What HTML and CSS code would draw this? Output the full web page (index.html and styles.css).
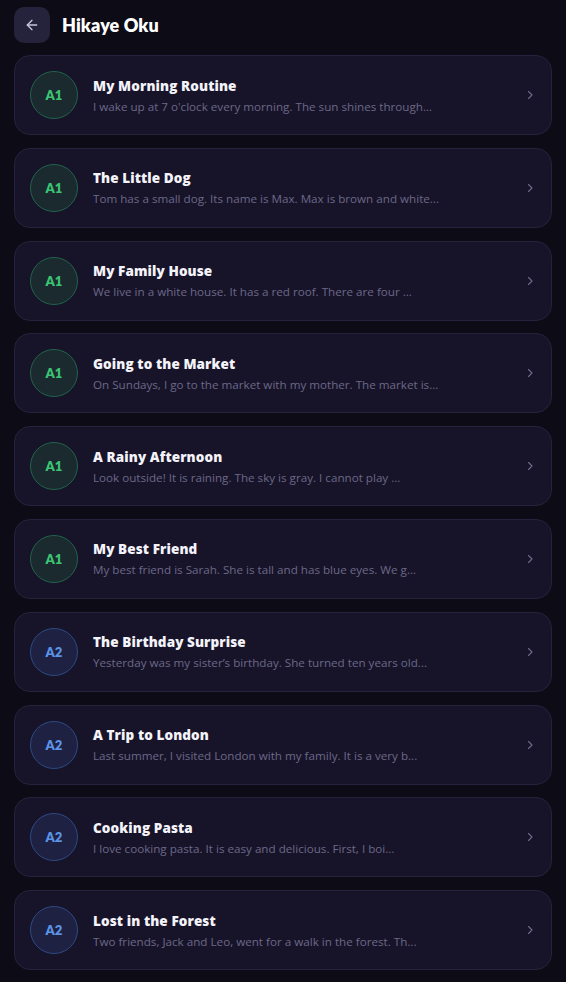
FILE: index.html
```html
<!DOCTYPE html>
<html lang="tr">
<head>
    <meta charset="UTF-8">
    <meta name="viewport" content="width=device-width, initial-scale=1.0">
    <title>Hikaye Oku</title>
    <link rel="stylesheet" href="styles.css">
</head>
<body>
    <header class="topbar">
        <button class="back-btn" type="button" aria-label="Geri">
            <svg width="16" height="16" viewBox="0 0 24 24" fill="none" stroke="currentColor" stroke-width="2" stroke-linecap="round" stroke-linejoin="round">
                <path d="M19 12H5"/>
                <path d="M12 19l-7-7 7-7"/>
            </svg>
        </button>
        <h1>Hikaye Oku</h1>
    </header>

    <div class="story-list" id="storyList"></div>

    <script>
        const stories = [
            { level: 'A1', title: 'My Morning Routine', text: 'I wake up at 7 o\'clock every morning. The sun shines through...' },
            { level: 'A1', title: 'The Little Dog', text: 'Tom has a small dog. Its name is Max. Max is brown and white...' },
            { level: 'A1', title: 'My Family House', text: 'We live in a white house. It has a red roof. There are four ...' },
            { level: 'A1', title: 'Going to the Market', text: 'On Sundays, I go to the market with my mother. The market is...' },
            { level: 'A1', title: 'A Rainy Afternoon', text: 'Look outside! It is raining. The sky is gray. I cannot play ...' },
            { level: 'A1', title: 'My Best Friend', text: 'My best friend is Sarah. She is tall and has blue eyes. We g...' },
            { level: 'A2', title: 'The Birthday Surprise', text: 'Yesterday was my sister\u2019s birthday. She turned ten years old...' },
            { level: 'A2', title: 'A Trip to London', text: 'Last summer, I visited London with my family. It is a very b...' },
            { level: 'A2', title: 'Cooking Pasta', text: 'I love cooking pasta. It is easy and delicious. First, I boi...' },
            { level: 'A2', title: 'Lost in the Forest', text: 'Two friends, Jack and Leo, went for a walk in the forest. Th...' }
        ];

        const list = document.getElementById('storyList');

        stories.forEach(story => {
            const card = document.createElement('a');
            card.href = '#';
            card.className = 'story-card';
            card.innerHTML = `
                <span class="level level-${story.level.toLowerCase()}">${story.level}</span>
                <div class="story-info">
                    <div class="story-title">${story.title}</div>
                    <div class="story-text">${story.text}</div>
                </div>
                <svg class="chevron" width="12" height="12" viewBox="0 0 24 24" fill="none" stroke="currentColor" stroke-width="2.2" stroke-linecap="round" stroke-linejoin="round">
                    <path d="M9 5l7 7-7 7"/>
                </svg>
            `;
            list.appendChild(card);
        });
    </script>
</body>
</html>
```

FILE: styles.css
```css
body {
    font-family: Lato, "Noto Sans", sans-serif;
    margin: 0;
    padding: 0 14px;
    background-color: #0c0b16;
    color: #ffffff;
}
.topbar {
    display: flex;
    align-items: center;
    gap: 12px;
    padding-top: 7px;
    height: 36px;
}
.back-btn {
    width: 36px;
    height: 36px;
    border: none;
    border-radius: 10px;
    background: #25233b;
    color: #c9c6dc;
    display: flex;
    align-items: center;
    justify-content: center;
    padding: 0;
}
.topbar h1 {
    margin: 0;
    font-size: 18px;
    font-weight: 800;
    letter-spacing: 0.1px;
}
.story-list {
    display: flex;
    flex-direction: column;
    gap: 12.8px;
    padding-top: 12px;
    padding-bottom: 12px;
}
.story-card {
    display: flex;
    align-items: center;
    height: 78px;
    padding: 0 15px 0 15px;
    background: #171429;
    border: 1px solid #26223d;
    border-radius: 16px;
    text-decoration: none;
    color: inherit;
}
.level {
    flex: none;
    width: 46px;
    height: 46px;
    border-radius: 50%;
    display: flex;
    align-items: center;
    justify-content: center;
    font-size: 13px;
    font-weight: 800;
}
.level-a1 {
    background: #1a2a2f;
    border: 1px solid #21634a;
    color: #3cc474;
}
.level-a2 {
    background: #1e2142;
    border: 1px solid #2d4a84;
    color: #5b93e6;
}
.story-info {
    flex: 1;
    margin-left: 15px;
    min-width: 0;
    font-family: "Open Sans", "Noto Sans", sans-serif;
}
.story-title {
    font-size: 13.5px;
    font-weight: 800;
    color: #f4f3fa;
    letter-spacing: 0.1px;
}
.story-text {
    font-size: 11.65px;
    color: #6c6888;
    margin-top: 4px;
    white-space: nowrap;
    overflow: hidden;
}
.chevron {
    flex: none;
    color: #6e6a8a;
}
```
